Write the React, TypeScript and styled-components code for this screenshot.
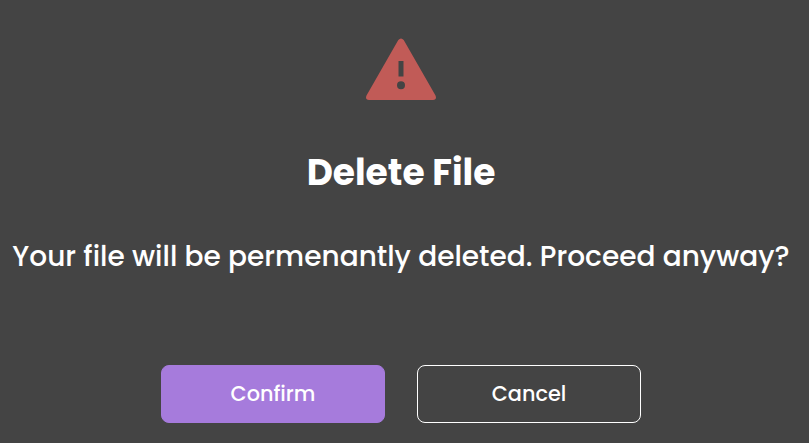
import React from 'react';
import styled, { createGlobalStyle } from 'styled-components';

const GlobalStyle = createGlobalStyle`
  *, *::before, *::after { box-sizing: border-box; }
  body {
    margin: 0;
    background: #444444;
    overflow: hidden;
    font-family: Poppins, Inter, "Open Sans", sans-serif;
    -webkit-font-smoothing: antialiased;
  }
`;

const Dialog = styled.main`
  display: flex;
  flex-direction: column;
  align-items: center;
  width: 802px;
  height: 443px;
  padding-top: 38px;
  color: #ffffff;
`;

const WarningIcon = styled.svg`
  display: block;
  width: 70px;
  height: 62px;
  fill: #c15b57;
`;

const Title = styled.h1`
  margin: 46px 0 0;
  font-size: 36px;
  line-height: 54px;
  font-weight: 700;
  white-space: nowrap;
`;

const Message = styled.p`
  margin: 36px 0 0;
  font-size: 28px;
  line-height: 42px;
  font-weight: 500;
  white-space: nowrap;
`;

const Actions = styled.div`
  display: flex;
  gap: 32px;
  margin-top: 87px;
`;

const Button = styled.button<{ $primary?: boolean }>`
  width: 224px;
  height: 58px;
  padding: 0 0 1px;
  border: 1px solid ${({ $primary }) => ($primary ? '#a67bdc' : '#ffffff')};
  border-radius: 8px;
  background: ${({ $primary }) => ($primary ? '#a67bdc' : 'transparent')};
  color: #ffffff;
  font: inherit;
  font-size: 20.8px;
  font-weight: 500;
  cursor: pointer;
`;

export default function App() {
  return (
    <>
      <GlobalStyle />
      <Dialog role="alertdialog" aria-labelledby="title" aria-describedby="message">
        <WarningIcon viewBox="0 0 70 62" aria-hidden="true">
          <path
            fillRule="evenodd"
            d="M32.3 2Q35-1.2 37.7 2L69.5 57.4Q71.2 61.8 67 62H3Q-1.2 61.8.5 57.4ZM32.5 23V38.5H37.5V23ZM35 43.3A4 4 0 1 0 35 51.3A4 4 0 1 0 35 43.3Z"
          />
        </WarningIcon>
        <Title id="title">Delete File</Title>
        <Message id="message">Your file will be permenantly deleted. Proceed anyway?</Message>
        <Actions>
          <Button $primary>Confirm</Button>
          <Button>Cancel</Button>
        </Actions>
      </Dialog>
    </>
  );
}
